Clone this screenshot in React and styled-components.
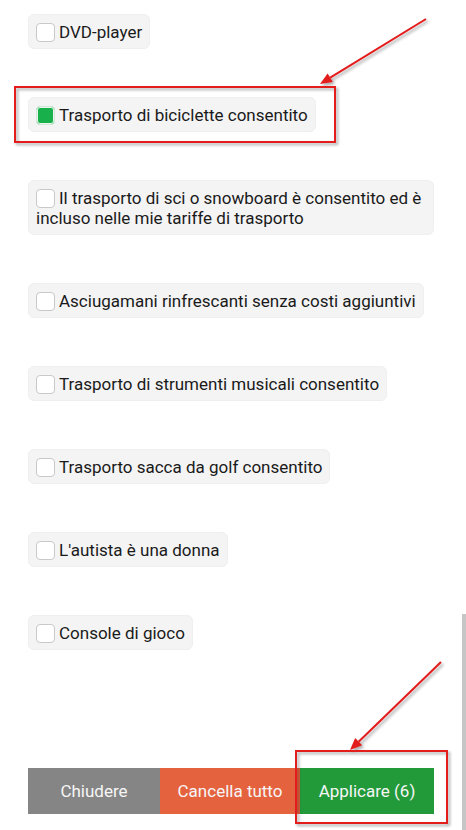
import React from 'react';
import styled, { createGlobalStyle } from 'styled-components';

const GlobalStyle = createGlobalStyle`
  html, body {
    margin: 0;
    padding: 0;
    background: #ffffff;
    font-family: Roboto, "Liberation Sans", sans-serif;
  }
  * { box-sizing: border-box; }
`;

const Page = styled.div`
  position: relative;
  width: 466px;
  height: 830px;
  overflow: hidden;
  background: #fff;
`;

const List = styled.div`
  display: flex;
  flex-direction: column;
  align-items: flex-start;
  gap: 48px;
  padding: 14px 32px 0 28px;
`;

const Chip = styled.label`
  display: inline-block;
  max-width: 406px;
  padding: 6.5px 7px;
  background: #f4f4f4;
  border: 1px solid #efefef;
  border-radius: 6px;
  font-size: 17px;
  line-height: 20px;
  color: #1a1a1a;
`;

const Box = styled.span`
  display: inline-block;
  width: 19px;
  height: 19px;
  margin-right: 4px;
  vertical-align: -4px;
  border-radius: 4px;
  background: ${p => (p.$checked ? '#18b04a' : '#ffffff')};
  border: 1px solid ${p => (p.$checked ? '#cfe9d6' : '#c9c9c9')};
  box-shadow: ${p => (p.$checked ? 'inset 0 0 0 1px #e9f5ec' : 'none')};
`;

const Footer = styled.div`
  display: grid;
  grid-template-columns: 132px 140px 134px;
  margin: 118px 0 0 28px;
  width: 406px;
  height: 46px;
`;

const Action = styled.button`
  border: none;
  margin: 0;
  padding: 0;
  font-family: inherit;
  font-size: 17px;
  color: #f6f6f6;
  background: ${p => p.$bg};
`;

const Scrollbar = styled.div`
  position: absolute;
  right: 0;
  top: 614px;
  width: 4px;
  bottom: 0;
  background: #c6c6c6;
`;

const Overlay = styled.svg`
  position: absolute;
  left: 0;
  top: 0;
  pointer-events: none;
`;

const options = [
  { label: 'DVD-player' },
  { label: 'Trasporto di biciclette consentito', checked: true },
  { label: 'Il trasporto di sci o snowboard è consentito ed è incluso nelle mie tariffe di trasporto' },
  { label: 'Asciugamani rinfrescanti senza costi aggiuntivi' },
  { label: 'Trasporto di strumenti musicali consentito' },
  { label: 'Trasporto sacca da golf consentito' },
  { label: "L'autista è una donna" },
  { label: 'Console di gioco' },
];

const Arrow = ({ x1, y1, x2, y2 }) => {
  const a = Math.atan2(y2 - y1, x2 - x1);
  const len = 12;
  const w = 5;
  const bx = x2 - len * Math.cos(a);
  const by = y2 - len * Math.sin(a);
  const px = -Math.sin(a) * w;
  const py = Math.cos(a) * w;
  return (
    <g>
      <line x1={x1} y1={y1} x2={bx} y2={by} stroke="#e31b1b" strokeWidth="2" />
      <polygon
        points={`${x2},${y2} ${bx + px},${by + py} ${bx - px},${by - py}`}
        fill="#e31b1b"
      />
    </g>
  );
};

export default function App() {
  return (
    <Page>
      <GlobalStyle />
      <List>
        {options.map((o, i) => (
          <Chip key={i}>
            <Box $checked={o.checked} />
            {o.label}
          </Chip>
        ))}
      </List>
      <Footer>
        <Action $bg="#858585">Chiudere</Action>
        <Action $bg="#e5623f">Cancella tutto</Action>
        <Action $bg="#229a3a">Applicare (6)</Action>
      </Footer>
      <Scrollbar />
      <Overlay width="466" height="830" viewBox="0 0 466 830">
        <defs>
          <filter id="sh" x="-10%" y="-10%" width="130%" height="140%">
            <feDropShadow dx="2" dy="2" stdDeviation="1.5" floodColor="#000" floodOpacity="0.35" />
          </filter>
        </defs>
        <g filter="url(#sh)">
          <rect x="15" y="87" width="320" height="55" fill="none" stroke="#e31b1b" strokeWidth="2" />
          <rect x="296" y="751" width="151" height="72" fill="none" stroke="#e31b1b" strokeWidth="2" />
          <Arrow x1={426} y1={19} x2={320} y2={84} />
          <Arrow x1={441} y1={662} x2={350} y2={750} />
        </g>
      </Overlay>
    </Page>
  );
}
